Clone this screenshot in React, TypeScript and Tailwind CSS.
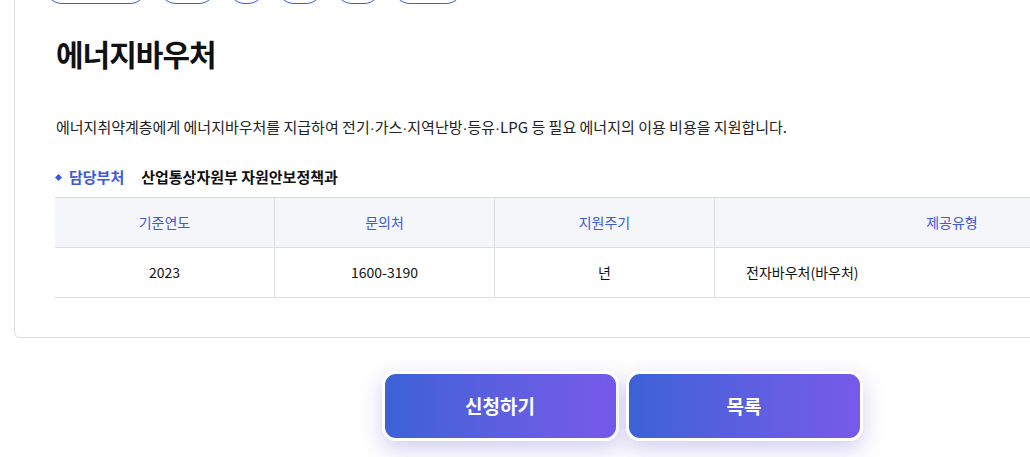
import React from 'react';

const tags = [102, 57, 37, 46, 46, 70];

const columns = [
  { label: '기준연도', value: '2023', w: 'w-[220px]', align: 'justify-center' },
  { label: '문의처', value: '1600-3190', w: 'w-[220px]', align: 'justify-center' },
  { label: '지원주기', value: '년', w: 'w-[220px]', align: 'justify-center' },
  { label: '제공유형', value: '전자바우처(바우처)', w: 'flex-1', align: 'justify-start pl-[31px]' },
];

const Dot = () => <span style={{ fontFamily: '"Liberation Sans", sans-serif' }}>·</span>;

const App: React.FC = () => {
  return (
    <div className="w-full h-[457px] overflow-hidden bg-white" style={{ fontFamily: '"Noto Sans CJK KR", "Noto Sans", sans-serif' }}>
      <div className="w-[1244px] pl-[14px] pr-[14px]">
        <div className="-mt-[40px] border border-[#dddddd] rounded-[6px] pl-[30px] pr-[30px] pb-[39px]">
          <div className="flex gap-[12px] mt-[9px]">
            {tags.map((w, i) => (
              <span key={i} className="h-[34px] rounded-[17px] border border-[#3b5bdb]" style={{ width: w }} />
            ))}
          </div>
          <div className="pl-[11px] pr-[11px]">
            <h1 className="mt-[31px] text-[30px] leading-[36px] font-bold text-[#111111] tracking-[-1px]">에너지바우처</h1>
            <p className="mt-[45px] text-[15px] leading-[22px] text-[#222222] tracking-normal">
              에너지취약계층에게 에너지바우처를 지급하여 전기<Dot />가스<Dot />지역난방<Dot />등유<Dot />LPG 등 필요 에너지의 이용 비용을 지원합니다.
            </p>
            <div className="mt-[27px] flex items-center text-[15px] leading-[22px]">
              <span className="w-[5px] h-[5px] bg-[#3b5bdb] rotate-45 mr-[8px]" />
              <span className="font-semibold text-[#3b5bdb]">담당부처</span>
              <span className="ml-[17px] font-semibold text-[#111111]">산업통상자원부 자원안보정책과</span>
            </div>
          </div>
          <div className="mt-[9px] ml-[10px] mr-[10px] border-t border-[#dddddd]">
            <div className="flex h-[50px] bg-[#f5f6fa] border-b border-[#dddddd]">
              {columns.map((c, i) => (
                <div
                  key={c.label}
                  className={`${c.w} flex items-center justify-center text-[14px] font-normal text-[#4059d8] ${i < 3 ? 'border-r border-[#dddddd]' : ''}`}
                >
                  {c.label}
                </div>
              ))}
            </div>
            <div className="flex h-[50px] border-b border-[#dddddd]">
              {columns.map((c, i) => (
                <div
                  key={c.label}
                  className={`${c.w} flex items-center ${c.align} text-[14px] font-normal text-[#111111] ${i < 3 ? 'border-r border-[#dddddd]' : ''}`}
                >
                  {c.value}
                </div>
              ))}
            </div>
          </div>
        </div>
        <div className="mt-[33px] flex justify-center gap-[7px]">
          <button className="w-[237px] h-[70px] rounded-[14px] border-[3px] border-white bg-linear-to-r from-[#3b62d6] to-[#765ae9] text-white text-[19px] font-bold shadow-[0_8px_22px_rgba(90,80,200,0.28)]">
            신청하기
          </button>
          <button className="w-[237px] h-[70px] rounded-[14px] border-[3px] border-white bg-linear-to-r from-[#3b62d6] to-[#765ae9] text-white text-[19px] font-bold shadow-[0_8px_22px_rgba(90,80,200,0.28)]">
            목록
          </button>
        </div>
      </div>
    </div>
  );
};

export default App;
